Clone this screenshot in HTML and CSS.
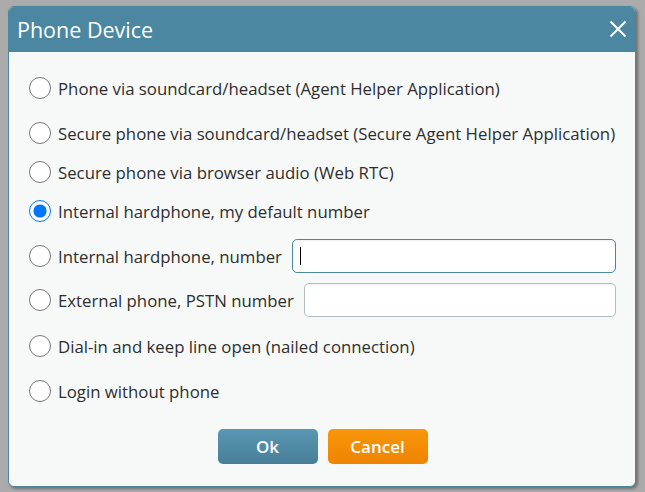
FILE: index.html
```html
<!DOCTYPE html>
<html>
<head>
<meta charset="utf-8">
<title>Phone Device</title>
<link rel="stylesheet" href="styles.css">
</head>
<body>
<div class="dialog">
  <div class="header">
    <span class="title">Phone Device</span>
    <svg class="close" width="18" height="18" viewBox="0 0 18 18"><path d="M1.5 1.5 L16.5 16.5 M16.5 1.5 L1.5 16.5" stroke="#fff" stroke-width="2" fill="none"/></svg>
  </div>
  <div class="body">
    <label class="row r1"><input type="radio" name="p"><span>Phone via soundcard/headset (Agent Helper Application)</span></label>
    <label class="row"><input type="radio" name="p"><span>Secure phone via soundcard/headset (Secure Agent Helper Application)</span></label>
    <label class="row tight"><input type="radio" name="p"><span>Secure phone via browser audio (Web RTC)</span></label>
    <label class="row tight"><input type="radio" name="p" checked><span>Internal hardphone, my default number</span></label>
    <div class="row"><input type="radio" name="p"><span>Internal hardphone, number</span><div class="field focused"><input type="text" class="txt"><i class="caret"></i></div></div>
    <div class="row r6"><input type="radio" name="p"><span>External phone, PSTN number</span><div class="field"><input type="text" class="txt"></div></div>
    <label class="row r7"><input type="radio" name="p"><span>Dial-in and keep line open (nailed connection)</span></label>
    <label class="row"><input type="radio" name="p"><span>Login without phone</span></label>
    <div class="buttons">
      <button class="btn ok">Ok</button>
      <button class="btn cancel">Cancel</button>
    </div>
  </div>
</div>
</body>
</html>
```
FILE: styles.css
```css
html, body {
  margin: 0;
  padding: 0;
  background: #ababab;
  width: 645px;
  height: 492px;
  overflow: hidden;
}
body {
  padding: 6px 0 0 8px;
  box-sizing: border-box;
  font-family: "Open Sans", "Noto Sans", sans-serif;
}
.dialog {
  width: 628px;
  background: #f7f9f9;
  border: 1px solid #4b87a1;
  border-radius: 6px;
  overflow: hidden;
  box-shadow: 2px 2px 3px rgba(0,0,0,0.35);
  box-sizing: border-box;
}
.header {
  height: 46px;
  margin: -1px -1px 0 -1px;
  background: #4b87a1;
  display: flex;
  align-items: center;
  justify-content: space-between;
  padding: 0 9px 0 9px;
  color: #fff;
}
.title {
  font-size: 21.5px;
}
.close {
  display: block;
}
.body {
  padding: 19px 19px 22px 20px;
  display: flex;
  flex-direction: column;
  color: #2e2e2e;
  font-size: 16.8px;
}
.row {
  display: flex;
  align-items: center;
  height: 34px;
  margin-top: 11px;
  white-space: nowrap;
}
.row.r1 { margin-top: 0; }
.row.tight { margin-top: 5px; }
.row.r6 { margin-top: 10px; }
.row.r7 { margin-top: 12px; }
.row input[type=radio] {
  width: 22px;
  height: 22px;
  margin: 0 7px 0 0;
  flex: none;
}
.field {
  flex: 1;
  margin-left: 10px;
  position: relative;
  height: 34px;
}
.txt {
  width: 100%;
  height: 34px;
  box-sizing: border-box;
  border: 1px solid #b3bcc2;
  border-radius: 5px;
  background: #fff;
  outline: none;
  box-shadow: inset 0 1px 2px rgba(0,0,0,0.06);
}
.focused .txt {
  border-color: #4b87a1;
}
.caret {
  position: absolute;
  left: 8px;
  top: 8px;
  width: 1px;
  height: 18px;
  background: #000;
}
.buttons {
  display: flex;
  justify-content: center;
  gap: 10px;
  margin-top: 21px;
}
.btn {
  width: 100px;
  height: 35px;
  border: none;
  border-radius: 5px;
  color: #fff;
  font-family: inherit;
  font-size: 17px;
  font-weight: 600;
  padding: 0;
}
.ok {
  background: linear-gradient(#5897b3, #497e98);
}
.cancel {
  background: linear-gradient(#f8960a, #ef8400);
}
```
